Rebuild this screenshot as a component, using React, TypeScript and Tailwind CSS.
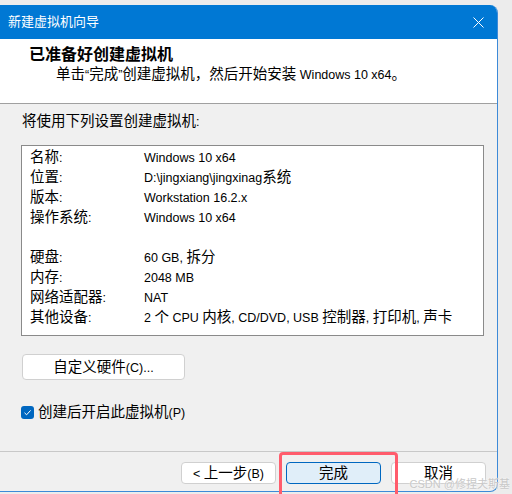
import React from "react";

const font = "font-['Liberation_Sans','Noto_Sans_CJK_SC',sans-serif]";

// CJK runs and Latin runs get different sizes, as in the original dialog font
const Mixed = ({
  s,
  cjk = "text-[14.5px]",
  latin = "text-[12.5px]",
}: {
  s: string;
  cjk?: string;
  latin?: string;
}) => (
  <span className="whitespace-pre">
    {s.split(/([\u3000-\u9fff\uff00-\uffef]+)/).map((part, i) =>
      part === "" ? null : (
        <span key={i} className={/[\u3000-\u9fff\uff00-\uffef]/.test(part) ? cjk : latin}>
          {part}
        </span>
      )
    )}
  </span>
);

const rows: [string, string][] = [
  ["名称:", "Windows 10 x64"],
  ["位置:", "D:\\jingxiang\\jingxinag系统"],
  ["版本:", "Workstation 16.2.x"],
  ["操作系统:", "Windows 10 x64"],
  ["", ""],
  ["硬盘:", "60 GB, 拆分"],
  ["内存:", "2048 MB"],
  ["网络适配器:", "NAT"],
  ["其他设备:", "2 个 CPU 内核, CD/DVD, USB 控制器, 打印机, 声卡"],
];

const Button = ({ label, primary }: { label: string; primary?: boolean }) => (
  <div
    className={`w-[95px] h-[22px] flex items-center justify-center rounded-[4px] border ${
      primary ? "bg-[#e0eef9] border-[#0067c0]" : "bg-white border-[#d0d0d0]"
    }`}
  >
    <Mixed s={label} />
  </div>
);

export default function App() {
  return (
    <div className={`relative w-[512px] h-[494px] bg-[#ececec] pt-[5px] overflow-hidden text-black ${font}`}>
      <div className="w-[498px] h-[487px] flex flex-col rounded-tr-[8px] rounded-br-[8px] border-r border-b border-[#3d8ad8] overflow-hidden bg-[#f0f0f0]">
        {/* title bar */}
        <div className="h-[34px] shrink-0 bg-[#0078d4] flex items-center justify-between pl-[8px] pr-[13px] text-white text-[13px]">
          <span>新建虚拟机向导</span>
          <svg width="11" height="11" viewBox="0 0 11 11">
            <path d="M0.5 0.5L10.5 10.5M10.5 0.5L0.5 10.5" stroke="white" strokeWidth="1" />
          </svg>
        </div>

        {/* header */}
        <div className="h-[65px] shrink-0 bg-white border-b border-[#a0a0a0] pt-[5px]">
          <div className="pl-[29px] h-[21px] leading-[21px] text-[16px] font-bold">已准备好创建虚拟机</div>
          <div className="pl-[56px] h-[18px] leading-[18px]">
            <Mixed s={"单击\u201c完成\u201d创建虚拟机，然后开始安装 Windows 10 x64。"} />
          </div>
        </div>

        {/* body */}
        <div className="h-[347px] shrink-0 pt-[7px] pl-[21px]">
          <div className="pl-[1px] h-[20px] leading-[20px]">
            <Mixed s="将使用下列设置创建虚拟机:" />
          </div>
          <div className="mt-[14px] w-[463px] h-[191px] bg-white border border-[#8a8a8a] pt-[1px] pl-[8px]">
            {rows.map(([k, v], i) => (
              <div key={i} className="flex h-[20px] leading-[20px]">
                <span className="w-[114px]">
                  <Mixed s={k} />
                </span>
                <Mixed s={v} />
              </div>
            ))}
          </div>
          <div className="mt-[18px] ml-[1px] w-[163px] h-[26px] flex items-center justify-center rounded-[4px] border border-[#d0d0d0] bg-white">
            <Mixed s="自定义硬件(C)..." />
          </div>
          <div className="mt-[20px] flex items-center gap-[4px]">
            <div className="w-[13px] h-[13px] rounded-[3px] bg-[#0067c0] flex items-center justify-center">
              <svg width="9" height="9" viewBox="0 0 9 9">
                <path d="M1.5 4.8L3.6 6.8L7.6 2.4" stroke="white" strokeWidth="1" fill="none" />
              </svg>
            </div>
            <Mixed s="创建后开启此虚拟机(P)" />
          </div>
        </div>

        {/* footer */}
        <div className="flex-1 border-t border-[#c8c8c8] pt-[10px] pl-[181px] flex gap-[10px]">
          <Button label="< 上一步(B)" />
          <Button label="完成" primary />
          <Button label="取消" />
        </div>
      </div>

      {/* highlight annotation */}
      <div className="absolute left-[279px] top-[452px] w-[119px] h-[48px] border-[3px] border-[#ff5c6c] rounded-[4px]" />
      <div className="absolute right-[2px] top-[476px] text-[11px] text-[#c8c8c8] [text-shadow:0_0_2px_white]">
        CSDN @修捏夫斯基
      </div>
    </div>
  );
}
